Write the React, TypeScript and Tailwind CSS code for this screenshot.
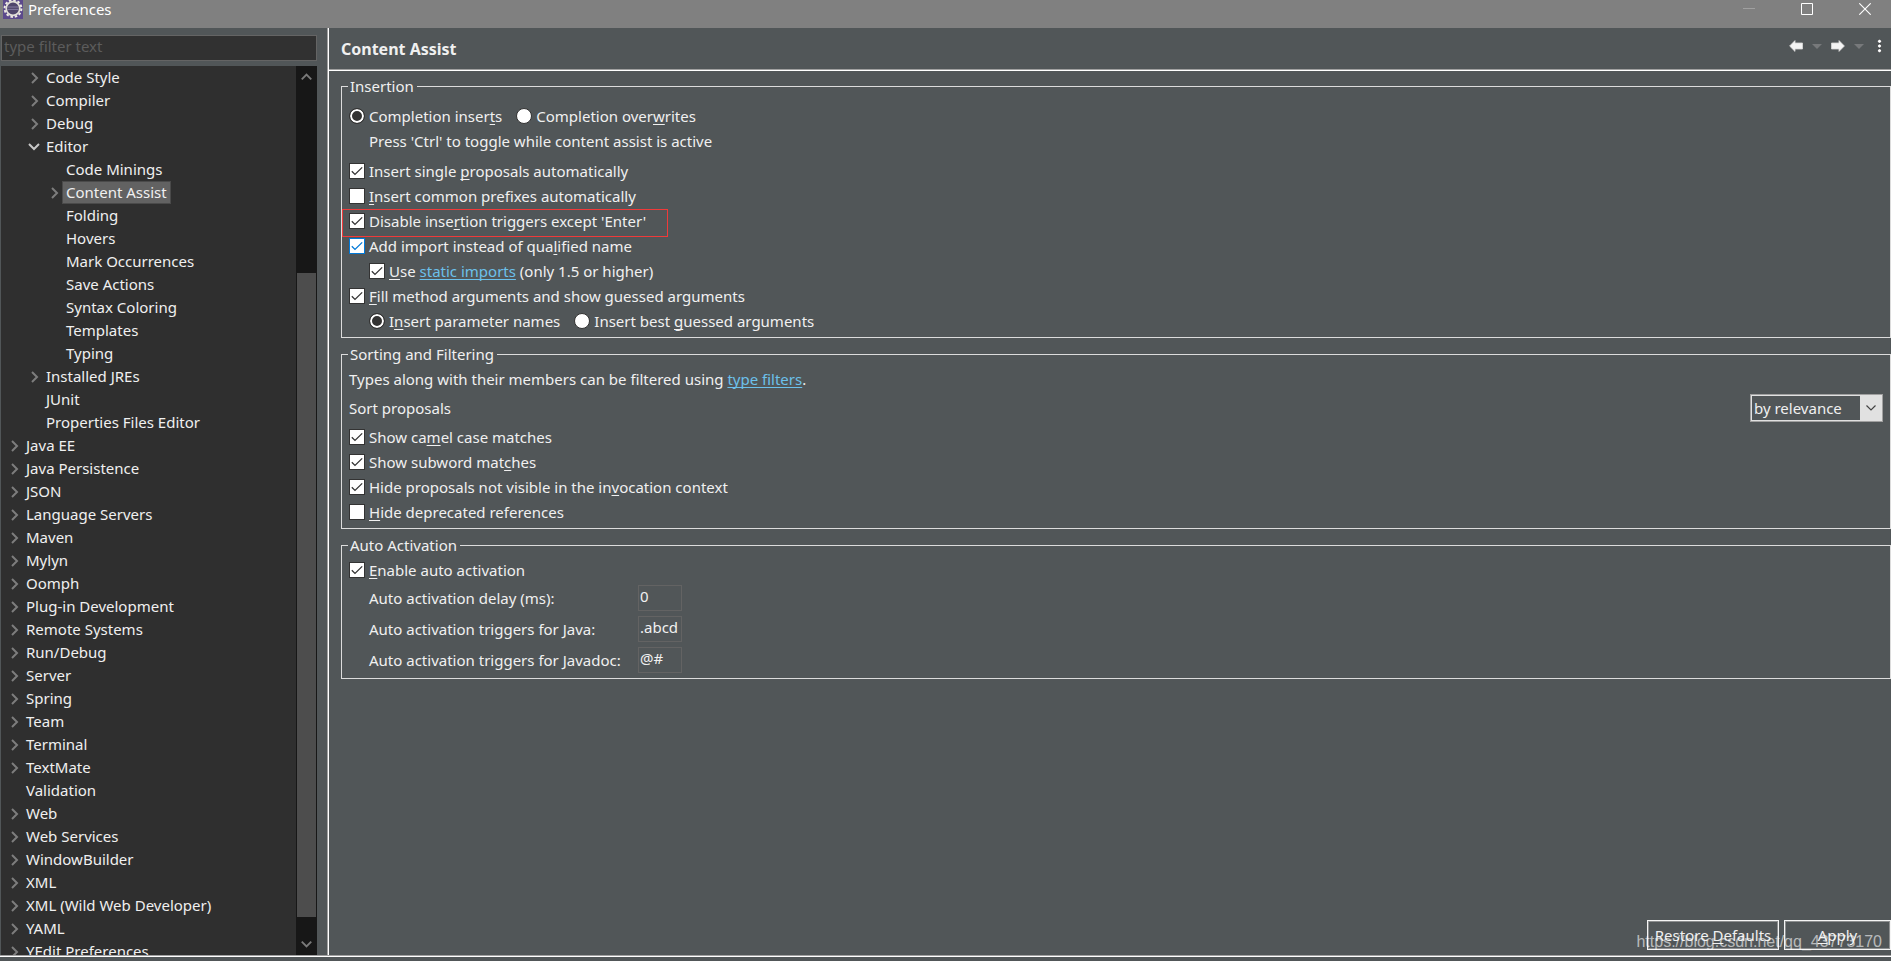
import { useState } from 'react'
import type { ReactNode } from 'react'
import { clsx } from 'clsx'

type Node = { label: string; level: number; state?: 'open' | 'closed' }

const tree: Node[] = [
  { label: 'Code Style', level: 1, state: 'closed' },
  { label: 'Compiler', level: 1, state: 'closed' },
  { label: 'Debug', level: 1, state: 'closed' },
  { label: 'Editor', level: 1, state: 'open' },
  { label: 'Code Minings', level: 2 },
  { label: 'Content Assist', level: 2, state: 'closed' },
  { label: 'Folding', level: 2 },
  { label: 'Hovers', level: 2 },
  { label: 'Mark Occurrences', level: 2 },
  { label: 'Save Actions', level: 2 },
  { label: 'Syntax Coloring', level: 2 },
  { label: 'Templates', level: 2 },
  { label: 'Typing', level: 2 },
  { label: 'Installed JREs', level: 1, state: 'closed' },
  { label: 'JUnit', level: 1 },
  { label: 'Properties Files Editor', level: 1 },
  { label: 'Java EE', level: 0, state: 'closed' },
  { label: 'Java Persistence', level: 0, state: 'closed' },
  { label: 'JSON', level: 0, state: 'closed' },
  { label: 'Language Servers', level: 0, state: 'closed' },
  { label: 'Maven', level: 0, state: 'closed' },
  { label: 'Mylyn', level: 0, state: 'closed' },
  { label: 'Oomph', level: 0, state: 'closed' },
  { label: 'Plug-in Development', level: 0, state: 'closed' },
  { label: 'Remote Systems', level: 0, state: 'closed' },
  { label: 'Run/Debug', level: 0, state: 'closed' },
  { label: 'Server', level: 0, state: 'closed' },
  { label: 'Spring', level: 0, state: 'closed' },
  { label: 'Team', level: 0, state: 'closed' },
  { label: 'Terminal', level: 0, state: 'closed' },
  { label: 'TextMate', level: 0, state: 'closed' },
  { label: 'Validation', level: 0 },
  { label: 'Web', level: 0, state: 'closed' },
  { label: 'Web Services', level: 0, state: 'closed' },
  { label: 'WindowBuilder', level: 0, state: 'closed' },
  { label: 'XML', level: 0, state: 'closed' },
  { label: 'XML (Wild Web Developer)', level: 0, state: 'closed' },
  { label: 'YAML', level: 0, state: 'closed' },
  { label: 'YEdit Preferences', level: 0, state: 'closed' },
]

const indent = ['pl-[5px]', 'pl-[25px]', 'pl-[45px]']

// "&" marks the mnemonic letter, as in SWT labels
function Mnemonic({ text }: { text: string }) {
  const i = text.indexOf('&')
  if (i < 0) return <>{text}</>
  return (
    <>
      {text.slice(0, i)}
      <span className="underline decoration-1 underline-offset-2 [text-decoration-skip-ink:none]">{text[i + 1]}</span>
      {text.slice(i + 2)}
    </>
  )
}

function Check({ text, checked = false, hot = false, children }: { text?: string; checked?: boolean; hot?: boolean; children?: ReactNode }) {
  return (
    <label className="flex h-[25px] w-fit items-center gap-1 whitespace-nowrap">
      <span className="relative size-4 shrink-0">
        <input
          type="checkbox"
          defaultChecked={checked}
          className={clsx('peer block size-4 appearance-none border bg-white', hot ? 'border-[#0078d7]' : 'border-[#333333]')}
        />
        <svg
          viewBox="0 0 16 16"
          className={clsx('pointer-events-none absolute inset-0 hidden size-4 peer-checked:block', hot ? 'text-[#0078d7]' : 'text-[#333333]')}
          fill="none"
          stroke="currentColor"
          strokeWidth="1.3"
        >
          <path d="M2.8 8.2 6 11.4 13.2 4.4" />
        </svg>
      </span>
      <span>{text ? <Mnemonic text={text} /> : children}</span>
    </label>
  )
}

function Radio({ text, name, checked = false }: { text: string; name: string; checked?: boolean }) {
  return (
    <label className="flex h-[25px] w-fit items-center gap-1 whitespace-nowrap">
      <input
        type="radio"
        name={name}
        defaultChecked={checked}
        className="size-4 shrink-0 appearance-none rounded-full border border-[#333333] bg-white checked:bg-[#333333] checked:shadow-[inset_0_0_0_2px_white]"
      />
      <span><Mnemonic text={text} /></span>
    </label>
  )
}

function Group({ title, className, children }: { title: string; className?: string; children: ReactNode }) {
  return (
    <fieldset className={clsx('min-w-0 border border-[#dcdcdc] pl-[7px]', className)}>
      <legend className="-ml-px h-6 px-[2px] pr-[3px] leading-6">{title}</legend>
      {children}
    </fieldset>
  )
}

function Chevron({ open }: { open: boolean }) {
  return open ? (
    <svg viewBox="0 0 16 16" className="size-4" fill="none" stroke="#c8c8c8" strokeWidth="2"><path d="M3 5 8 10 13 5" /></svg>
  ) : (
    <svg viewBox="0 0 16 16" className="size-4" fill="none" stroke="#7d7d7d" strokeWidth="2"><path d="M6 3 11 8 6 13" /></svg>
  )
}

function AppIcon() {
  return (
    <svg viewBox="0 0 20 19" className="h-[19px] w-5">
      <rect width="20" height="19" fill="#5c4a8c" />
      <circle cx="10" cy="8.5" r="8.4" fill="none" stroke="#efece4" strokeWidth="2" strokeDasharray="2.5 1.9" />
      <circle cx="10" cy="8.5" r="6.8" fill="#50466b" stroke="#e2dfd8" strokeWidth="1.8" />
      <path d="M4.8 7h10.4M4.6 9.4h10.8" stroke="#857ca3" strokeWidth="1" />
    </svg>
  )
}

function Arrow({ flip = false }: { flip?: boolean }) {
  return (
    <svg viewBox="0 0 14 12" className={clsx('h-3 w-[14px]', flip && '-scale-x-100')}>
      <path d="M.6 6 6 .6V3H13.5V9H6V11.4Z" fill="#f4f4f4" stroke="#d8d8d8" strokeWidth=".8" strokeLinejoin="round" />
    </svg>
  )
}

function Caret() {
  return (
    <svg viewBox="0 0 10 5" className="h-[5px] w-[10px]"><path d="M0 0H10L5 5Z" fill="#77797b" /></svg>
  )
}

const triggers = [
  { id: 'delay', label: 'Auto activation delay (ms):', value: '0' },
  { id: 'java', label: 'Auto activation triggers for Java:', value: '.abcd' },
  { id: 'javadoc', label: 'Auto activation triggers for Javadoc:', value: '@#' },
]

export default function App() {
  const [selected, setSelected] = useState('Content Assist')

  return (
    <div className="relative flex h-screen flex-col overflow-hidden bg-[#515658] font-['Noto_Sans','Open_Sans',sans-serif] text-[15px] leading-5 text-[#f0f0f0]">
      <header className="flex h-7 shrink-0 items-start bg-[#808080] text-white">
        <div className="flex flex-1 items-start gap-[5px] pl-[3px]">
          <AppIcon />
          <h1 className="leading-[18px]">Preferences</h1>
        </div>
        <div className="flex h-[18px] items-center gap-2 pr-px">
          <button aria-label="Minimize" className="flex h-[18px] w-[50px] items-center justify-center">
            <svg viewBox="0 0 12 12" className="size-3"><path d="M0 5.5H12" stroke="#a0a0a0" /></svg>
          </button>
          <button aria-label="Maximize" className="flex h-[18px] w-[50px] items-center justify-center">
            <svg viewBox="0 0 12 12" className="size-3" fill="none" stroke="#fff"><path d="M.5.5H11.5V11.5H.5Z" /></svg>
          </button>
          <button aria-label="Close" className="flex h-[18px] w-[50px] items-center justify-center">
            <svg viewBox="0 0 12 12" className="size-3" fill="none" stroke="#fff" strokeWidth="1.1"><path d="M.3.3 11.7 11.7M11.7.3.3 11.7" /></svg>
          </button>
        </div>
      </header>

      <div className="flex min-h-0 flex-1">
        <aside className="flex w-[327px] shrink-0 flex-col pt-[7px] pr-[10px] pl-px">
          <input
            type="text"
            aria-label="type filter text"
            placeholder="type filter text"
            className="h-[26px] w-full shrink-0 border border-[#646464] bg-[#313131] px-[2px] pb-1 outline-none placeholder:text-[#5c5c5c]"
          />
          <div className="mt-[5px] flex min-h-0 flex-1 bg-[#2f2f2f]">
            <ul className="min-w-0 flex-1 overflow-hidden">
              {tree.map((n) => (
                <li key={n.label} className={clsx('flex h-[23px] items-center', indent[n.level])}>
                  <span className="w-4 shrink-0">{n.state && <Chevron open={n.state === 'open'} />}</span>
                  <button
                    onClick={() => setSelected(n.label)}
                    className={clsx(
                      'flex h-[23px] items-center border px-[3px] pb-[2px] whitespace-nowrap',
                      selected === n.label ? 'border-[#4a4a4a] bg-[#626262]' : 'border-transparent'
                    )}
                  >
                    {n.label}
                  </button>
                </li>
              ))}
            </ul>
            <div className="flex w-[21px] flex-col bg-[#171717] px-px">
              <svg viewBox="0 0 20 20" className="h-5 w-full" fill="none" stroke="#7a7a7a" strokeWidth="2"><path d="M5 13.5 10 8.5 15 13.5" /></svg>
              <div className="flex-[187]" />
              <div className="flex-[644] bg-[#4d4d4d]" />
              <div className="flex-[18]" />
              <svg viewBox="0 0 20 20" className="h-5 w-full" fill="none" stroke="#7a7a7a" strokeWidth="2"><path d="M5 6.5 10 11.5 15 6.5" /></svg>
            </div>
          </div>
        </aside>

        <main className="flex min-w-0 flex-1 flex-col border-l border-[#a0a0a0] shadow-[inset_1px_0_0_white]">
          <div className="ml-px flex h-[43px] shrink-0 items-center justify-between border-b border-white pl-3 shadow-[inset_0_-1px_0_#a0a0a0]">
            <h2 className="text-base font-bold">Content Assist</h2>
            <div className="mb-[6px] flex items-center pr-[9px]">
              <button aria-label="Back"><Arrow /></button>
              <button aria-label="Back history" className="px-[9px]"><Caret /></button>
              <button aria-label="Forward"><Arrow flip /></button>
              <button aria-label="Forward history" className="px-[9px]"><Caret /></button>
              <button aria-label="View menu" className="ml-1">
                <svg viewBox="0 0 5 14" className="h-[14px] w-[5px]" fill="#fff" stroke="#303436" strokeWidth=".7">
                  <circle cx="2.5" cy="2.3" r="2" /><circle cx="2.5" cy="7" r="2" /><circle cx="2.5" cy="11.7" r="2" />
                </svg>
              </button>
            </div>
          </div>

          <div className="flex flex-1 flex-col gap-1 pt-[3px] pl-[13px]">
            <Group title="Insertion" className="pb-1">
              <div className="flex gap-[14px] pt-[5px]">
                <Radio name="mode" text="Completion inser&ts" checked />
                <Radio name="mode" text="Completion over&writes" />
              </div>
              <p className="mb-1 pt-px pl-5 leading-[25px]">Press 'Ctrl' to toggle while content assist is active</p>
              <Check text="Insert single &proposals automatically" checked />
              <Check text="&Insert common prefixes automatically" />
              <div className="relative w-fit">
                <Check text="Disable inse&rtion triggers except 'Enter'" checked />
                <span className="pointer-events-none absolute top-px -right-[22px] -bottom-1 -left-[7px] border border-[#f03a3a]" />
              </div>
              <Check text="Add import instead of qua&lified name" checked hot />
              <div className="pl-5">
                <Check checked>
                  <Mnemonic text="&Use" />{' '}
                  <a href="#static-imports" className="text-[#6cc0ea] underline underline-offset-2 [text-decoration-skip-ink:none]">static imports</a>{' '}
                  (only 1.5 or higher)
                </Check>
              </div>
              <Check text="&Fill method arguments and show guessed arguments" checked />
              <div className="flex gap-[14px] pl-5">
                <Radio name="args" text="I&nsert parameter names" checked />
                <Radio name="args" text="Insert best &guessed arguments" />
              </div>
            </Group>

            <Group title="Sorting and Filtering" className="pb-1">
              <p className="pt-px leading-[25px]">
                Types along with their members can be filtered using{' '}
                <a href="#type-filters" className="text-[#6cc0ea] underline underline-offset-2 [text-decoration-skip-ink:none]">type filters</a>.
              </p>
              <div className="my-[2px] flex h-7 items-center justify-between pr-[7px]">
                <label htmlFor="sort">Sort proposals</label>
                <div className="relative">
                  <select id="sort" className="h-7 w-[133px] appearance-none border border-[#a0a0a0] bg-[#515658] pb-px pl-[3px] shadow-[inset_0_0_0_1px_#e1e1e1] outline-none">
                    <option>by relevance</option>
                    <option>alphabetically</option>
                  </select>
                  <span className="pointer-events-none absolute inset-y-px right-px flex w-[22px] items-center justify-center bg-[#e1e1e1]">
                    <svg viewBox="0 0 10 6" className="h-[6px] w-[10px]" fill="none" stroke="#444" strokeWidth="1.2"><path d="M.5.5 5 5 9.5.5" /></svg>
                  </span>
                </div>
              </div>
              <Check text="Show ca&mel case matches" checked />
              <Check text="Show subword mat&ches" checked />
              <Check text="Hide proposals not visible in the in&vocation context" checked />
              <Check text="&Hide deprecated references" />
            </Group>

            <Group title="Auto Activation" className="pb-[5px]">
              <Check text="&Enable auto activation" checked />
              <div className="mt-[3px] grid w-fit grid-cols-[minmax(264px,auto)_auto] gap-x-[5px] gap-y-[5px] pl-5">
                {triggers.map((t) => (
                  <div key={t.id} className="contents">
                    <label htmlFor={t.id} className="leading-[26px]">{t.label}</label>
                    <input id={t.id} type="text" defaultValue={t.value} className="h-[26px] w-11 border border-[#636363] bg-transparent pb-1 pl-px outline-none" />
                  </div>
                ))}
              </div>
            </Group>

            <div className="mt-auto flex justify-end gap-[5px] pb-[5px]">
              <button className="h-[30px] w-[132px] border border-[#f4f4f4] whitespace-nowrap shadow-[inset_0_0_0_1px_#8c8e8f]">
                <Mnemonic text="Restore &Defaults" />
              </button>
              <button className="h-[30px] w-[107px] border border-[#f4f4f4] shadow-[inset_0_0_0_1px_#8c8e8f]">
                <Mnemonic text="&Apply" />
              </button>
            </div>
          </div>
        </main>
      </div>

      <footer className="h-[6px] shrink-0 border-t border-[#a0a0a0] shadow-[inset_0_1px_0_white]" />
      <span className="pointer-events-none absolute right-[9px] bottom-[7px] font-['Liberation_Sans',sans-serif] text-base text-white/60">
        https://blog.csdn.net/qq_43773170
      </span>
    </div>
  )
}
